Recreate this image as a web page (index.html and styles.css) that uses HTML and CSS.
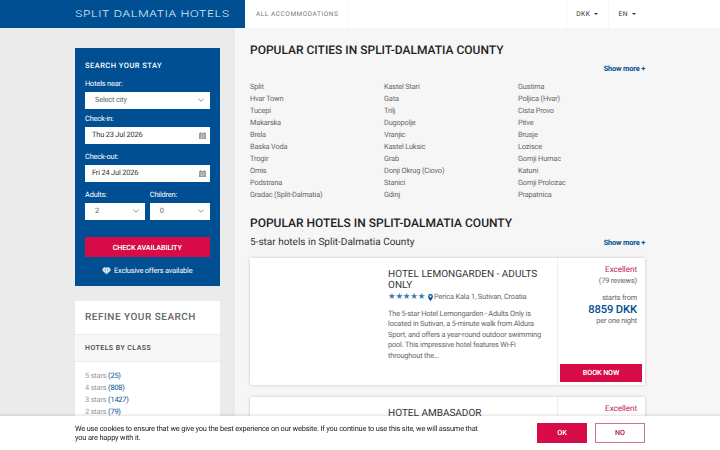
FILE: index.html
```html
<!DOCTYPE html>
<html lang="en">
<head>
    <meta charset="UTF-8">
    <meta name="viewport" content="width=device-width, initial-scale=1.0">
    <title>Split Dalmatia Hotels</title>
    <link rel="stylesheet" href="styles.css">
</head>
<body>

    <header class="header">
        <a class="logo"><span>SPLIT DALMATIA HOTELS</span></a>
        <a class="nav-link">ALL ACCOMMODATIONS</a>
        <div class="nav-right">
            <a class="dropdown">DKK <i class="caret"></i></a>
            <a class="dropdown">EN <i class="caret"></i></a>
        </div>
    </header>

    <div class="page">
        <aside class="sidebar">
            <form class="search">
                <h3>SEARCH YOUR STAY</h3>
                <label>Hotels near:</label>
                <div class="field select">Select city <svg class="chevron" viewBox="0 0 8 8"><path d="M1.5 2.8 4 5.2 6.5 2.8"/></svg></div>
                <label>Check-in:</label>
                <div class="field date">Thu 23 Jul 2026 <svg class="calendar" viewBox="0 0 7 7"><path d="M0 1h7v6H0z"/><path class="lines" d="M0 2.6h7M1 4.1h5M1 5.5h5M2.3 3v3.5M4.6 3v3.5"/><path d="M1.2 0h1v1.5h-1zM4.8 0h1v1.5h-1z"/></svg></div>
                <label>Check-out:</label>
                <div class="field date">Fri 24 Jul 2026 <svg class="calendar" viewBox="0 0 7 7"><path d="M0 1h7v6H0z"/><path class="lines" d="M0 2.6h7M1 4.1h5M1 5.5h5M2.3 3v3.5M4.6 3v3.5"/><path d="M1.2 0h1v1.5h-1zM4.8 0h1v1.5h-1z"/></svg></div>
                <div class="guests">
                    <div>
                        <label>Adults:</label>
                        <div class="field select">2 <svg class="chevron" viewBox="0 0 8 8"><path d="M1.5 2.8 4 5.2 6.5 2.8"/></svg></div>
                    </div>
                    <div>
                        <label>Children:</label>
                        <div class="field select">0 <svg class="chevron" viewBox="0 0 8 8"><path d="M1.5 2.8 4 5.2 6.5 2.8"/></svg></div>
                    </div>
                </div>
                <a class="btn check">CHECK AVAILABILITY</a>
                <p class="offers"><svg class="diamond" viewBox="0 0 10 8"><path class="fill" d="M2 0h6l2 2.8L5 8 0 2.8z"/><path class="cut" d="M0 2.8h10M3.3 2.8 5 7.5 6.7 2.8 5.7.3M3.3 2.8 4.3.3"/></svg>Exclusive offers available</p>
            </form>

            <section class="refine">
                <h2>REFINE YOUR SEARCH</h2>
                <h4>HOTELS BY CLASS</h4>
                <ul>
                    <li>5 stars <b>(25)</b></li>
                    <li>4 stars <b>(808)</b></li>
                    <li>3 stars <b>(1427)</b></li>
                    <li>2 stars <b>(79)</b></li>
                </ul>
            </section>
        </aside>

        <main class="main">
            <h2>POPULAR CITIES IN SPLIT-DALMATIA COUNTY</h2>
            <a class="more">Show more +</a>
            <div class="cities">
                <ul>
                    <li>Split</li>
                    <li>Hvar Town</li>
                    <li>Tucepi</li>
                    <li>Makarska</li>
                    <li>Brela</li>
                    <li>Baska Voda</li>
                    <li>Trogir</li>
                    <li>Omis</li>
                    <li>Podstrana</li>
                    <li>Gradac (Split-Dalmatia)</li>
                </ul>
                <ul>
                    <li>Kastel Stari</li>
                    <li>Gata</li>
                    <li>Trilj</li>
                    <li>Dugopolje</li>
                    <li>Vranjic</li>
                    <li>Kastel Luksic</li>
                    <li>Grab</li>
                    <li>Donji Okrug (Ciovo)</li>
                    <li>Stanici</li>
                    <li>Gdinj</li>
                </ul>
                <ul>
                    <li>Gustirna</li>
                    <li>Poljica (Hvar)</li>
                    <li>Cista Provo</li>
                    <li>Pitve</li>
                    <li>Brusje</li>
                    <li>Lozisce</li>
                    <li>Gornji Humac</li>
                    <li>Katuni</li>
                    <li>Gornji Prolozac</li>
                    <li>Prapatnica</li>
                </ul>
            </div>

            <h2>POPULAR HOTELS IN SPLIT-DALMATIA COUNTY</h2>
            <div class="subhead">
                <h3>5-star hotels in Split-Dalmatia County</h3>
                <a class="more">Show more +</a>
            </div>

            <article class="card">
                <div class="photo"></div>
                <div class="info">
                    <h3>HOTEL LEMONGARDEN - ADULTS ONLY</h3>
                    <p class="place"><span class="stars">★★★★★</span><svg class="pin" viewBox="0 0 5 7"><path d="M2.5 0A2.4 2.4 0 0 0 .1 2.4C.1 4 2.5 7 2.5 7S4.9 4 4.9 2.4A2.4 2.4 0 0 0 2.5 0zm0 1.3a1.1 1.1 0 1 1 0 2.2 1.1 1.1 0 0 1 0-2.2z"/></svg>Perica Kala 1, Sutivan, Croatia</p>
                    <p class="text">The 5-star Hotel Lemongarden - Adults Only is located in Sutivan, a 5-minute walk from Aldura Sport, and offers a year-round outdoor swimming pool. This impressive hotel features Wi-Fi throughout the…</p>
                </div>
                <div class="price">
                    <p class="rating">Excellent</p>
                    <p>(79 reviews)</p>
                    <p class="from">starts from</p>
                    <p class="amount">8859 DKK</p>
                    <p>per one night</p>
                    <a class="btn book">BOOK NOW</a>
                </div>
            </article>

            <article class="card">
                <div class="photo"></div>
                <div class="info">
                    <h3>HOTEL AMBASADOR</h3>
                </div>
                <div class="price">
                    <p class="rating">Excellent</p>
                </div>
            </article>
        </main>
    </div>

    <div class="cookies">
        <p>We use cookies to ensure that we give you the best experience on our website. If you continue to use this site, we will assume that you are happy with it.</p>
        <a class="btn">OK</a>
        <a class="btn outline">NO</a>
    </div>

</body>
</html>
```

FILE: styles.css
```css
* {
    margin: 0;
    padding: 0;
    box-sizing: border-box;
}

body {
    font-family: Roboto, sans-serif;
    font-size: 7.4px;
    line-height: 12px;
    letter-spacing: -0.17px;
    text-rendering: geometricPrecision;
    color: #666;
    background: #f6f6f6;
    height: 450px;
    overflow: hidden;
}

ul {
    list-style: none;
}

svg {
    display: block;
    flex: none;
}

.header {
    display: flex;
    height: 28px;
    background: #fff;
    font-size: 7px;
    line-height: 28px;
    letter-spacing: 0.5px;
}

.logo {
    width: 245px;
    padding-left: 75px;
    background: #004f92;
    color: #d5e9f8;
    font-family: Inter, sans-serif;
    font-size: 9.2px;
    font-weight: 300;
    letter-spacing: 0.3px;
    line-height: 29px;
    white-space: nowrap;
}

.logo span {
    display: inline-block;
    transform: scaleX(1.31);
    transform-origin: left;
}

.nav-link {
    width: 103px;
    padding-left: 11px;
    border-right: 1px solid #f8f8f8;
    color: #777;
    font-size: 6.5px;
    letter-spacing: 0.55px;
}

.nav-right {
    display: flex;
    margin-left: auto;
    margin-right: 74px;
    color: #333;
}

.dropdown {
    display: flex;
    align-items: center;
    gap: 4px;
    padding: 0 10px 0 9px;
    border-left: 1px solid #f6f6f6;
    font-size: 6.7px;
}

.caret {
    border: 2px solid transparent;
    border-top-color: #333;
    border-bottom: 0;
}

.page {
    display: flex;
    height: 422px;
    overflow: hidden;
}

.sidebar {
    width: 235px;
    padding: 20px 15.5px 0 75px;
    background: #ebebeb;
    flex: none;
}

.search {
    height: 238px;
    padding: 12px 10px 0;
    background: #004f92;
    color: #fff;
}

.search h3 {
    font-size: 7.5px;
    font-weight: 500;
    letter-spacing: 0.47px;
    margin-bottom: 6.5px;
}

.search label {
    display: block;
    line-height: 10px;
    margin-bottom: 3px;
}

.field {
    display: flex;
    align-items: center;
    justify-content: space-between;
    height: 17.5px;
    padding: 0 5px 0 8px;
    background: #fff;
    color: #333;
    margin-bottom: 4.5px;
}

.field.select {
    padding-left: 10px;
    color: #666;
}

.field.date {
    padding: 0 4px 0 7px;
    margin-bottom: 7.5px;
}

.chevron {
    width: 8px;
    height: 8px;
    fill: none;
    stroke: #888;
    stroke-width: 0.9;
}

.calendar {
    width: 7px;
    height: 7px;
    fill: #999;
}

.calendar .lines {
    stroke: #ddd;
    stroke-width: 0.4;
}

.guests {
    display: grid;
    grid-template-columns: 1fr 1fr;
    gap: 5px;
}

.btn {
    display: block;
    background: #d60b47;
    color: #fff;
    font-size: 7.2px;
    font-weight: 600;
    letter-spacing: -0.1px;
    text-align: center;
}

.check {
    height: 20px;
    line-height: 21px;
    margin-top: 12.5px;
}

.offers {
    display: flex;
    align-items: center;
    justify-content: center;
    gap: 3px;
    margin-top: 7.5px;
}

.diamond {
    width: 9px;
    height: 8px;
}

.diamond .fill {
    fill: #fff;
}

.diamond .cut {
    fill: none;
    stroke: #004f92;
    stroke-width: 0.4;
}

.refine {
    margin-top: 15px;
    height: 149px;
    background: #fff;
}

.refine h2 {
    height: 33px;
    padding-left: 10px;
    line-height: 33px;
    font-size: 10px;
    font-weight: 500;
    letter-spacing: 0.5px;
}

.refine h4 {
    height: 28px;
    padding-left: 10px;
    border-top: 1px solid #ebebeb;
    border-bottom: 1px solid #ebebeb;
    background: #f7f7f7;
    color: #444;
    font-size: 7px;
    font-weight: 500;
    line-height: 27px;
    letter-spacing: 0.45px;
}

.refine ul {
    padding: 8px 10px;
    color: #999;
}

.refine b {
    color: #004f92;
    font-weight: 400;
}

.main {
    width: 410px;
    padding: 14px 0 0 15px;
    flex: none;
}

.main h2 {
    font-size: 12px;
    font-weight: 500;
    line-height: 16px;
    letter-spacing: 0;
    color: #222;
}

.more {
    display: block;
    color: #004f92;
    font-weight: 700;
    text-align: right;
}

.main h2 + .more {
    margin-top: 5px;
}

.cities {
    display: grid;
    grid-template-columns: repeat(3, 134px);
    margin: 6px 0 14px;
}

.subhead {
    display: flex;
    justify-content: space-between;
    align-items: center;
    margin: 4px 0 7px;
    height: 16px;
}

.subhead h3 {
    font-size: 10px;
    font-weight: 400;
    letter-spacing: 0;
    color: #333;
}

.card {
    display: flex;
    height: 127px;
    margin-bottom: 12px;
    background: #fff;
    box-shadow: 0 0 3px rgba(0, 0, 0, 0.2);
}

.photo {
    width: 138px;
}

.info {
    width: 169px;
    padding: 10.5px 10px 0 0;
}

.info h3 {
    font-size: 10px;
    font-weight: 400;
    line-height: 11px;
    letter-spacing: 0;
    color: #333;
}

.place {
    display: flex;
    align-items: center;
    height: 12px;
    margin-top: 0.5px;
    white-space: nowrap;
}

.stars {
    font-family: "DejaVu Sans", sans-serif;
    font-size: 8.5px;
    letter-spacing: -0.2px;
    color: #3c78ac;
    margin-right: 3px;
}

.pin {
    width: 5px;
    height: 7px;
    margin-right: 1px;
    fill: #004f92;
}

.text {
    margin-top: 5.5px;
    line-height: 10.5px;
}

.price {
    display: flex;
    flex-direction: column;
    flex: 1;
    padding: 7px 3px 3px 2px;
    border-left: 1px solid #eee;
    line-height: 10px;
    text-align: right;
}

.price p {
    padding-right: 5px;
}

.price .rating {
    color: #c51c51;
    font-size: 8.2px;
    line-height: 11px;
    letter-spacing: -0.1px;
}

.from {
    margin-top: 6.5px;
}

.price .amount {
    color: #004f92;
    font-size: 11.2px;
    font-weight: 500;
    line-height: 13px;
    letter-spacing: -0.1px;
}

.book {
    height: 18px;
    margin-top: auto;
    line-height: 18px;
}

/* stays on top of the page at the bottom of the window */
.cookies {
    position: fixed;
    left: 0;
    right: 0;
    bottom: 0;
    display: flex;
    height: 34px;
    padding: 7px 75px 0;
    background: #fff;
    box-shadow: 0 0 4px rgba(0, 0, 0, 0.2);
    color: #222;
}

.cookies p {
    width: 412px;
    padding-top: 1px;
    margin-right: auto;
    line-height: 9px;
}

.cookies .btn {
    width: 50px;
    height: 20px;
    margin-left: 8px;
    line-height: 20px;
}

.cookies .outline {
    border: 1px solid #d3738f;
    background: #fff;
    color: #b3254f;
    line-height: 18px;
}
```
